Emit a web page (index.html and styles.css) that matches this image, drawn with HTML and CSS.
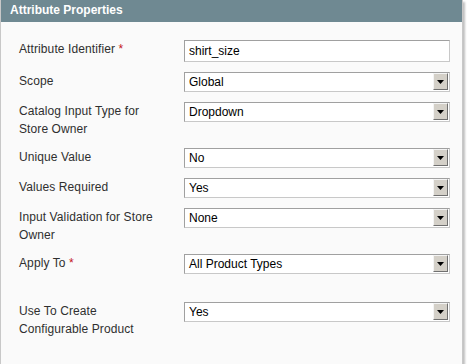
FILE: index.html
```html
<!DOCTYPE html>
<html lang="en-US">

<head>
    <meta charset="UTF-8">
    <title>Attribute Properties</title>
    <link rel="stylesheet" href="styles.css">
</head>

<body>
    <div class="box">
        <div class="box-head">Attribute Properties</div>
        <div class="box-body">
            <div class="row">
                <label>Attribute Identifier <span class="required">*</span></label>
                <div class="input-text">shirt_size</div>
            </div>
            <div class="row">
                <label>Scope</label>
                <div class="select">Global<span class="select-btn"></span></div>
            </div>
            <div class="row">
                <label>Catalog Input Type for<br>Store Owner</label>
                <div class="select">Dropdown<span class="select-btn"></span></div>
            </div>
            <div class="row">
                <label>Unique Value</label>
                <div class="select">No<span class="select-btn"></span></div>
            </div>
            <div class="row">
                <label>Values Required</label>
                <div class="select">Yes<span class="select-btn"></span></div>
            </div>
            <div class="row">
                <label>Input Validation for Store<br>Owner</label>
                <div class="select">None<span class="select-btn"></span></div>
            </div>
            <div class="row row-spaced">
                <label>Apply To <span class="required">*</span></label>
                <div class="select">All Product Types<span class="select-btn"></span></div>
            </div>
            <div class="row">
                <label>Use To Create<br>Configurable Product</label>
                <div class="select">Yes<span class="select-btn"></span></div>
            </div>
        </div>
    </div>
</body>

</html>
```
FILE: styles.css
```css
body,
html {
    margin: 0;
    background: #ffffff;
}

body {
    font-family: "Liberation Sans", Arial, sans-serif;
    font-size: 12px;
    color: #2f2f2f;
}

.box {
    width: 461px;
    background: #fafafa;
    border-left: 1px solid #c8c8c8;
    border-right: 1px solid #c8c8c8;
    border-bottom: 1px solid #c8c8c8;
    box-shadow: 2px 2px 2px rgba(0, 0, 0, 0.25);
}

.box-head {
    height: 22px;
    line-height: 21px;
    padding-left: 9px;
    background: #6f8992;
    color: #ffffff;
    font-weight: bold;
    font-size: 12px;
}

.box-body {
    padding: 13px 0 31px 18px;
}

.row {
    display: grid;
    grid-template-columns: 165px 266px;
    padding: 5px 0;
}

.row-spaced {
    padding-bottom: 23px;
}

.row label {
    line-height: 18px;
    letter-spacing: 0.1px;
}

.required {
    color: #c4161c;
}

.input-text,
.select {
    box-sizing: border-box;
    position: relative;
    background: #ffffff;
    border: 1px solid;
    border-color: #a0a0a0 #c8c8c8 #c8c8c8 #a0a0a0;
    padding-left: 4px;
    color: #000000;
}

.input-text {
    height: 22px;
    line-height: 20px;
}

.select {
    height: 20px;
    line-height: 18px;
}

.select-btn {
    position: absolute;
    right: 1px;
    top: 0px;
    width: 15px;
    height: 17px;
    box-sizing: border-box;
    background: #d4d0c8;
    border: 1px solid;
    border-color: #f4f4f4 #707070 #707070 #f4f4f4;
}

.select-btn::after {
    content: "";
    position: absolute;
    left: 3px;
    top: 6px;
    width: 7px;
    height: 4px;
    background: #000000;
    clip-path: polygon(0 0, 100% 0, 50% 100%);
}
```
